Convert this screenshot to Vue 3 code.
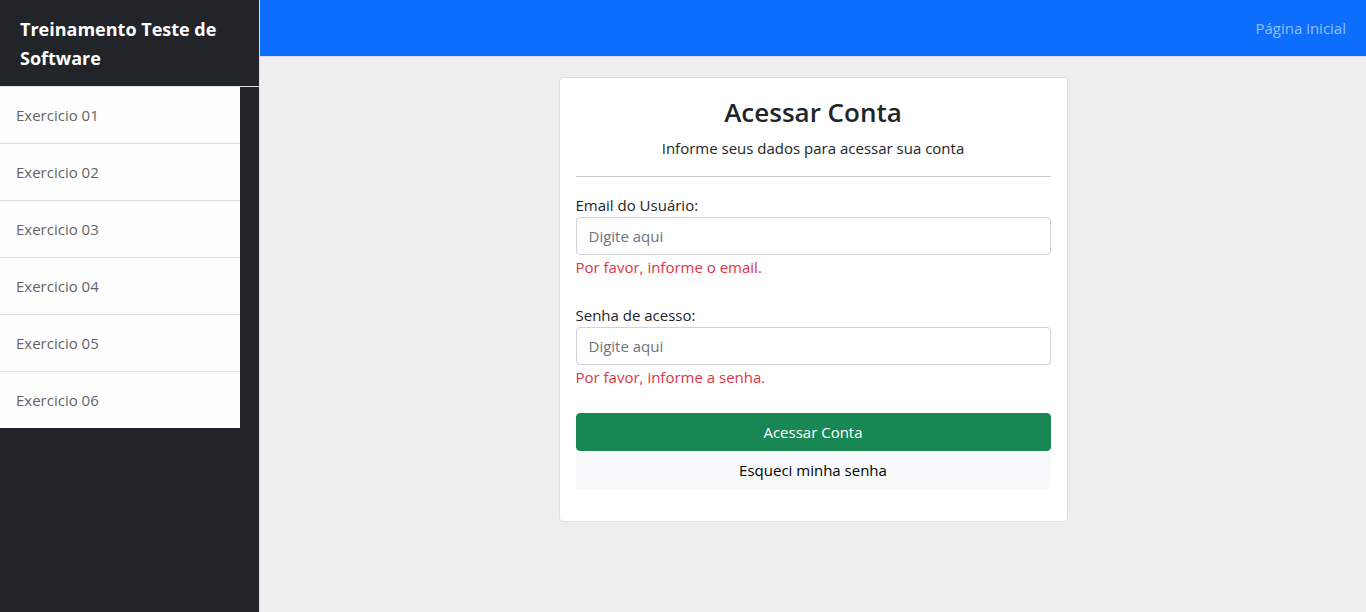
<script setup>
import { ref } from 'vue'

const exercises = ['01', '02', '03', '04', '05', '06']
const email = ref('')
const password = ref('')
</script>

<template>
  <div class="layout">
    <aside class="sidebar">
      <div class="brand">Treinamento Teste de Software</div>
      <nav class="menu" aria-label="Exercicios">
        <a v-for="n in exercises" :key="n" class="menu-item" href="#">Exercicio {{ n }}</a>
      </nav>
    </aside>

    <div class="content">
      <header class="navbar">
        <a class="nav-link" href="#">Página inicial</a>
      </header>

      <main class="main">
        <section class="card">
          <h3 class="title">Acessar Conta</h3>
          <p class="subtitle">Informe seus dados para acessar sua conta</p>
          <hr class="rule" />
          <form novalidate @submit.prevent>
            <div class="field">
              <label for="email">Email do Usuário:</label>
              <input id="email" v-model="email" type="email" placeholder="Digite aqui" aria-describedby="email-error" />
              <span id="email-error" class="error">Por favor, informe o email.</span>
            </div>
            <div class="field">
              <label for="password">Senha de acesso:</label>
              <input id="password" v-model="password" type="password" placeholder="Digite aqui" aria-describedby="password-error" />
              <span id="password-error" class="error">Por favor, informe a senha.</span>
            </div>
            <div class="actions">
              <button class="btn btn-success" type="submit">Acessar Conta</button>
              <a class="btn btn-light" href="#">Esqueci minha senha</a>
            </div>
          </form>
        </section>
      </main>
    </div>
  </div>
</template>

<style>
body {
  margin: 0;
  background: #eee;
}
</style>

<style scoped>
.layout,
.layout * {
  box-sizing: border-box;
}

.layout {
  display: flex;
  min-height: 100vh;
  background: #eee;
  color: #212529;
  font-family: "Segoe UI", "Open Sans", "Noto Sans", sans-serif;
  font-size: 15px;
  line-height: 24px;
}

.sidebar {
  flex: 0 0 260px;
  border-right: 1px solid #dee2e6;
  background: #212529;
}

.brand {
  padding: 15px 20px 13px;
  border-bottom: 1px solid #dee2e6;
  color: #fff;
  font-size: 18px;
  font-weight: 700;
  line-height: 29px;
}

.menu {
  display: flex;
  flex-direction: column;
  width: 240px;
}

.menu-item {
  padding: 16px;
  border-bottom: 1px solid #dfdfdf;
  background: #fefefe;
  color: #636464;
  text-decoration: none;
}

.menu-item:last-child {
  border-bottom: 0;
}

.content {
  flex: 1;
  min-width: 0;
}

.navbar {
  display: flex;
  justify-content: flex-end;
  padding: 16px 20px;
  border-bottom: 1px solid #dee2e6;
  background: #0d6efd;
}

.nav-link {
  color: #92bffe;
  text-decoration: none;
}

.main {
  display: flex;
  justify-content: center;
  padding: 20px;
}

.card {
  width: calc(50% - 24px);
  padding: 16px;
  border: 1px solid #dfdfdf;
  border-radius: 4px;
  background: #fff;
}

.title {
  margin: 0 0 6px;
  font-size: 26px;
  font-weight: 600;
  line-height: 36px;
  text-align: center;
}

.subtitle {
  margin: 0;
  text-align: center;
}

.rule {
  height: 1px;
  margin: 16px 0;
  border: 0;
  background: #c8c9ca;
}

.field {
  display: flex;
  flex-direction: column;
  margin-bottom: 24px;
}

.field input {
  width: 100%;
  height: 38px;
  padding: 6px 12px;
  border: 1px solid #ced4da;
  border-radius: 4px;
  background: #fff;
  color: #212529;
  font: inherit;
}

.field input::placeholder {
  color: #6c757d;
  opacity: 1;
}

.error {
  color: #dc3545;
}

.actions {
  display: flex;
  flex-direction: column;
  margin-bottom: 16px;
}

.btn {
  padding: 6px 12px;
  border: 1px solid transparent;
  border-radius: 4px;
  font: inherit;
  text-align: center;
  text-decoration: none;
  cursor: pointer;
}

.btn-success {
  border-color: #198754;
  background: #198754;
  color: #fff;
}

.btn-light {
  border-color: #f8f9fa;
  background: #f8f9fa;
  color: #000;
}
</style>
